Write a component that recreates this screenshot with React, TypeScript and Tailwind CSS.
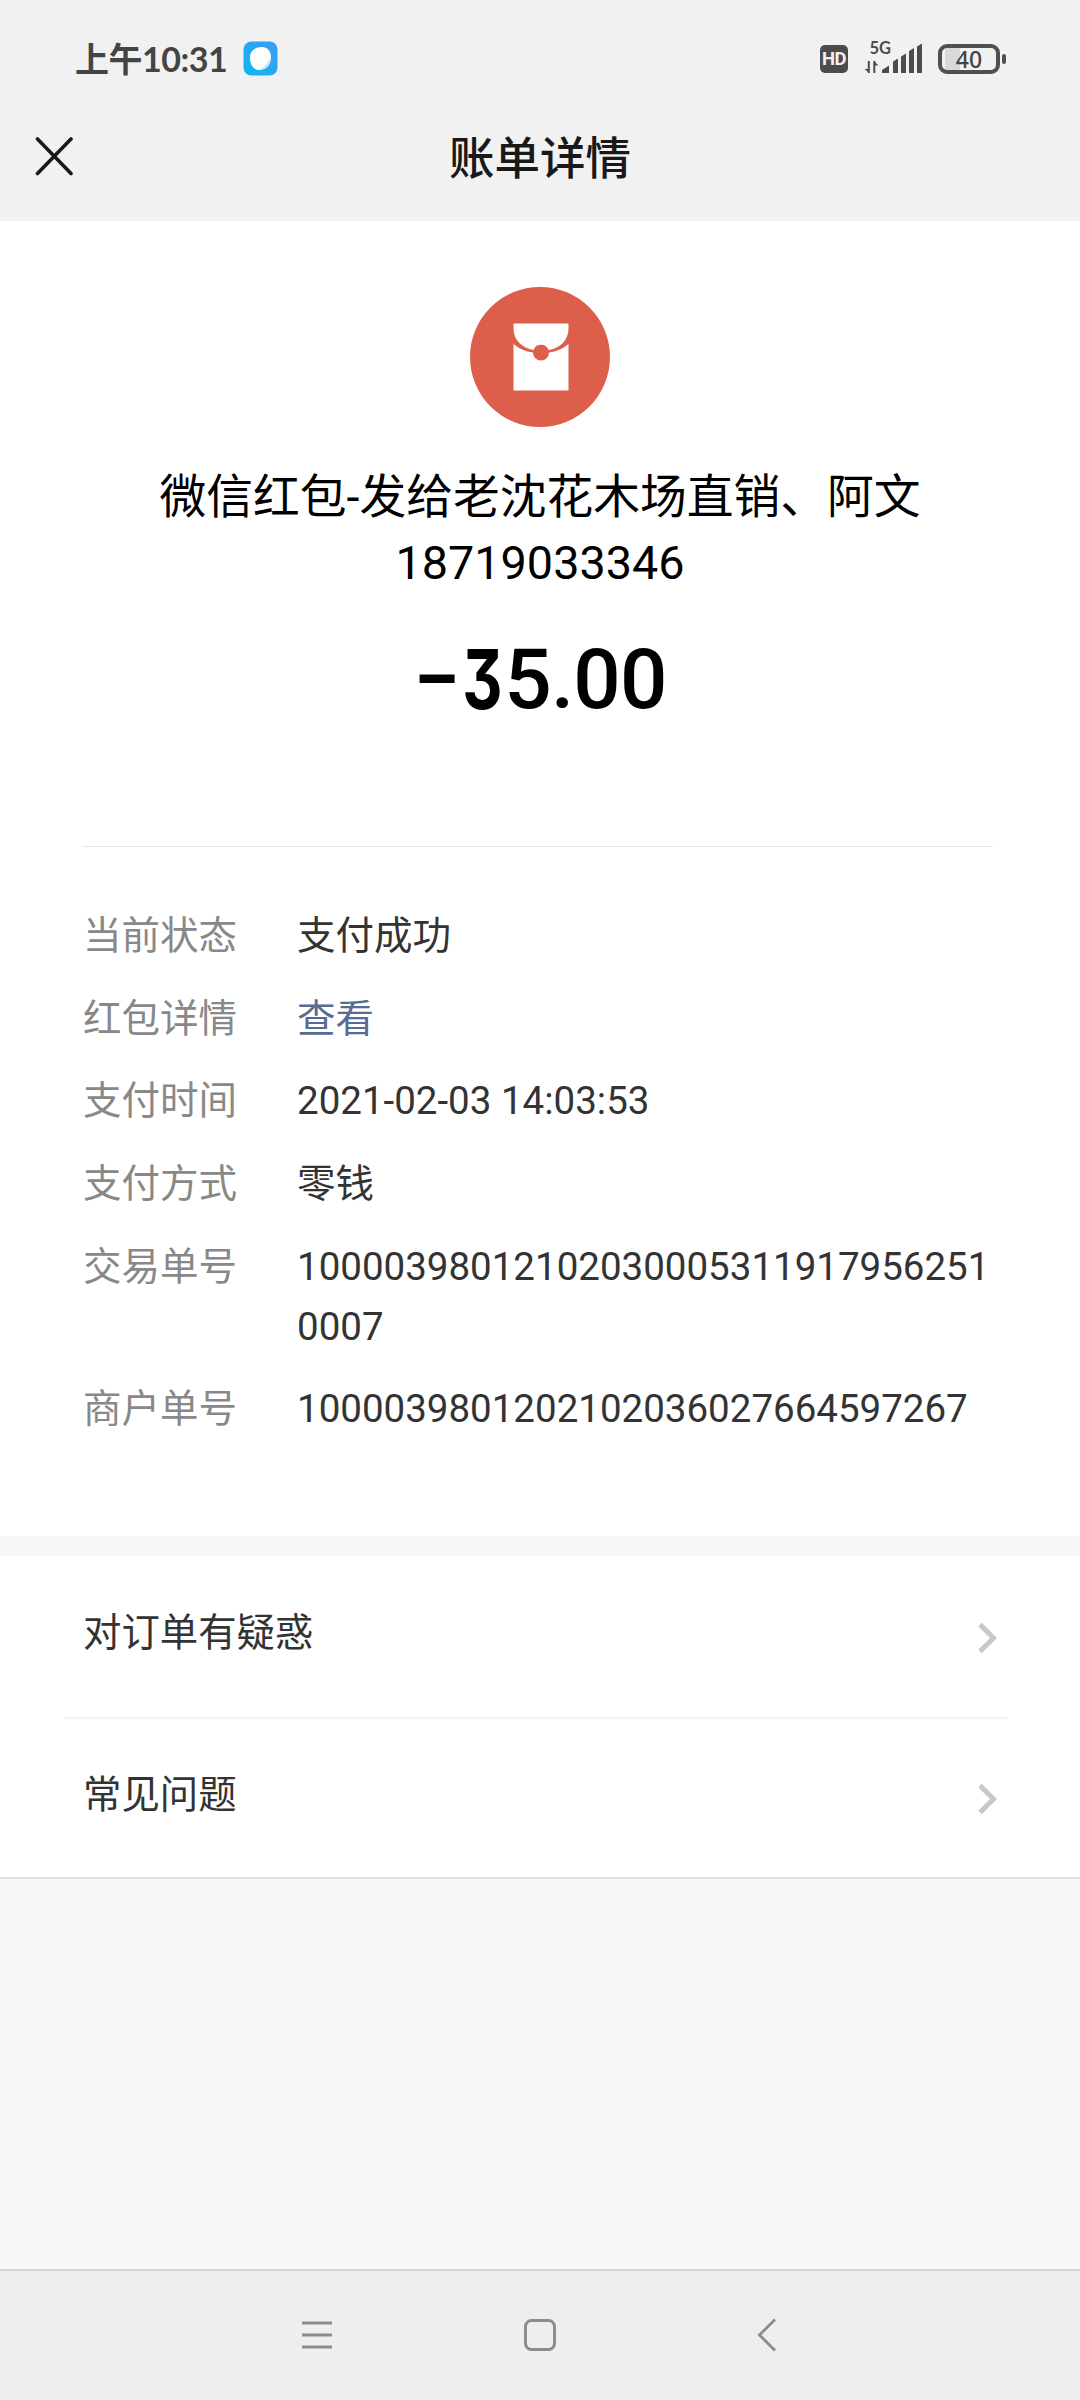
const details = [
    { label: '当前状态', value: '支付成功' },
    { label: '红包详情', value: '查看', link: true },
    { label: '支付时间', value: '2021-02-03 14:03:53' },
    { label: '支付方式', value: '零钱' },
    { label: '交易单号', value: '100003980121020300053119179562510007' },
    { label: '商户单号', value: '1000039801202102036027664597267' },
]

function StatusBar() {
    return (
        <div className="flex h-[100px] items-center justify-between pt-[18px] pl-[75px] pr-[74px]">
            <div className="flex items-center">
                <span className="w-[168px] whitespace-nowrap font-['Lato','Noto_Sans_CJK_SC',sans-serif] text-[34px] leading-[40px] font-bold tracking-[-0.5px] text-[#444]">上午10:31</span>
                <svg className="h-[36px] w-[36px]" viewBox="0 0 36 36">
                    <defs>
                        <linearGradient id="app" x1="1" y1="0" x2="0" y2="1">
                            <stop offset="0" stopColor="#3f9af0" />
                            <stop offset="1" stopColor="#0cb9f2" />
                        </linearGradient>
                    </defs>
                    <rect x="0.5" y="0.5" width="34" height="34" rx="8" fill="url(#app)" />
                    <path d="M7 19C6 11 11 6 19 6c5 0 9 4 9 10 0 8-5 13-12 13-5 0-8-4-9-10z" fill="#fff" />
                    <path d="M28 16c0 8-5 13-12 13 6-3 8-6 12-13z" fill="#c9e6f8" />
                </svg>
            </div>
            <div className="flex h-[36px] items-center">
                <span className="flex h-[28px] w-[28px] items-center justify-center rounded-[5px] bg-[#4c4c4c] font-['Roboto',sans-serif] text-[18.500px] leading-none font-bold tracking-[-0.5px] text-[#f1f1f1]">HD</span>
                <svg className="ml-[16px] h-[36px] w-[60px] overflow-visible" viewBox="864 41 60 36">
                    <text x="869.5" y="54" fontFamily="Lato, sans-serif" fontWeight="700" fontSize="16.5" fill="#4c4c4c">5G</text>
                    <path d="M868.8 61v12M874.3 73V61" stroke="#4c4c4c" strokeWidth="2" fill="none" />
                    <path d="M869 73l-4.500-4h4.500zM874 61l4.500 4.500H874z" fill="#4c4c4c" />
                    <path d="M882 73v-3l7-4.5V73zM893 73V61.500l5-3V73zM901 73V56.500l5-3V73zM909 73V51l5-3V73zM917 73V46.500l5-3V73z" fill="#4c4c4c" />
                </svg>
                <div className="ml-[14px] flex h-[30px] w-[62px] items-center justify-center rounded-[9px] border-4 border-[#505050] bg-[linear-gradient(to_right,#f1f1f1_3px,#d9d9d9_3px,#d9d9d9_18px,#f1f1f1_18px)] font-['Noto_Sans',sans-serif] text-[23px] leading-none font-medium text-[#444]">40</div>
                <span className="ml-[2px] h-[10px] w-[4px] rounded-full bg-[#505050]" />
            </div>
        </div>
    )
}

function Chevron() {
    return (
        <svg className="mt-[2px] h-[32px] w-[20px]" viewBox="0 0 20 32">
            <path d="M2 2.500L15.500 16 2 29.500" fill="none" stroke="#c8c8c8" strokeWidth="5" />
        </svg>
    )
}

export default function App() {
    return (
        <div className="flex h-[2400px] w-[1080px] flex-col bg-[#f7f7f7] font-['Roboto','Noto_Sans_CJK_SC',sans-serif] text-[#333]">
            <header className="h-[221px] bg-[#f1f1f1]">
                <StatusBar />
                <div className="flex h-[112px] items-center pl-[34px]">
                    <svg className="h-[40px] w-[40px]" viewBox="0 0 40 40">
                        <path d="M3.500 3L37 37.500M37 3L3.500 37.500" stroke="#191919" strokeWidth="3.600" strokeLinecap="round" />
                    </svg>
                    <h1 className="mt-[8px] mr-[74px] flex-1 text-center text-[45.500px] leading-[60px] font-medium text-[#191919]">账单详情</h1>
                </div>
            </header>

            <main className="flex h-[1315px] flex-col bg-white px-[83px] pt-[66px]">
                <div className="flex flex-col items-center text-black">
                    <svg className="h-[140px] w-[140px]" viewBox="0 0 140 140">
                        <circle cx="70" cy="70" r="70" fill="#de5e4c" />
                        <path d="M43.500 36.500h55v5c0 12-9 20-20 21.500a8 8 0 0 0-15 0c-11-2-20-9.500-20-21.500z" fill="#fff" />
                        <path d="M43.500 57c5 4.500 12 7.500 19.500 8.500a8 8 0 0 0 16 0c7.500-1 14.500-4 19.500-8.500v46.500h-55z" fill="#fff" />
                        <circle cx="71" cy="64" r="5.500" fill="#de5e4c" />
                    </svg>
                    <p className="mt-[37px] text-center text-[46.750px] leading-[66px]">微信红包-发给老沈花木场直销、阿文<br />18719033346</p>
                    <p className="mt-[34px] flex h-[100px] items-center text-[83.500px] leading-[100px] font-medium tracking-[-0.8px]">
                        <span className="font-semibold">−</span>
                        <span className="flex w-[45px] justify-center font-['Inter',sans-serif] text-[82px] font-bold [font-feature-settings:'cv09']"><span className="scale-x-[0.76]">3</span></span>
                        <span>5.00</span>
                    </p>
                </div>

                <div className="mt-[116px] h-px w-[910px] shrink-0 bg-[#e2e2e2]" />

                <div className="mt-[59px] flex flex-col gap-[23px] text-[38.500px] leading-[59.700px]">
                    {details.map((row) => (
                        <div className="flex" key={row.label}>
                            <span className="w-[214px] shrink-0 text-[#888]">{row.label}</span>
                            <span className={row.link ? 'text-[#576b95]' : 'w-[700px] break-all'}>{row.value}</span>
                        </div>
                    ))}
                </div>
            </main>

            <section className="mt-[20px] flex h-[323px] flex-col border-b-2 border-[#e0e0e0] bg-white pr-[72px] pl-[64px] text-[38.400px]">
                <div className="flex h-[163px] items-center justify-between border-b-2 border-[#f4f4f4] pl-[19px] pr-[10px]">
                    <span className="-mt-[7px]">对订单有疑惑</span>
                    <Chevron />
                </div>
                <div className="flex h-[158px] items-center justify-between pl-[19px] pr-[10px]">
                    <span className="-mt-[7px]">常见问题</span>
                    <Chevron />
                </div>
            </section>

            <nav className="mt-auto flex h-[131px] items-center border-t-2 border-[#d4d4d4] bg-[#eee] pb-[2px] pl-[300px]">
                <svg className="h-[34px] w-[34px]" viewBox="0 0 34 34">
                    <path d="M2 5h30M2 17h30M2 29h30" stroke="#8c8c8c" strokeWidth="2.800" />
                </svg>
                <svg className="ml-[189px] h-[34px] w-[34px]" viewBox="0 0 34 34">
                    <rect x="2.500" y="2.500" width="29" height="29" rx="6" fill="none" stroke="#8c8c8c" strokeWidth="3" />
                </svg>
                <svg className="ml-[199px] h-[34px] w-[22px]" viewBox="0 0 22 34">
                    <path d="M19 1.500L3.500 17 19 32.500" fill="none" stroke="#8c8c8c" strokeWidth="2.800" />
                </svg>
            </nav>
        </div>
    )
}
